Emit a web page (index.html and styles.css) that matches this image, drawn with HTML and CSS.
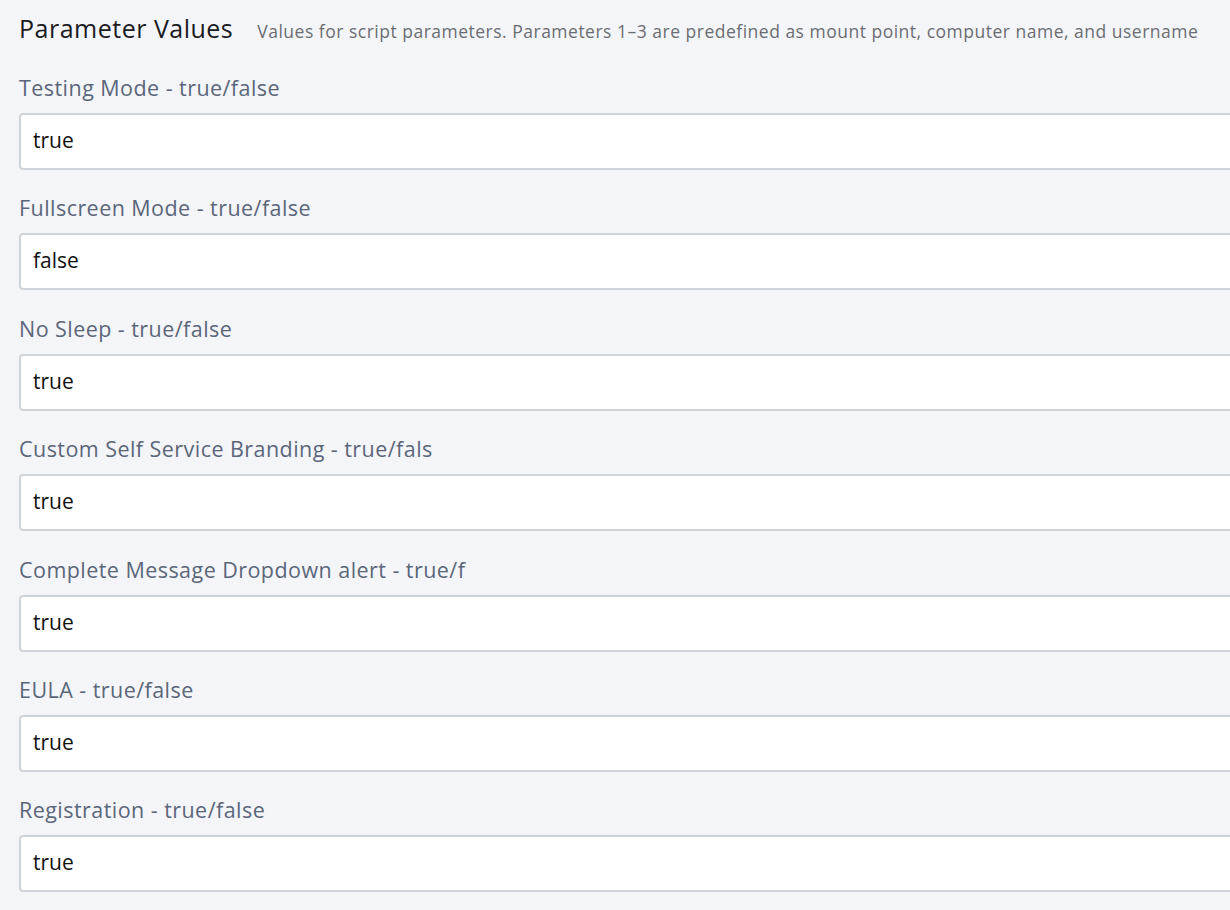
FILE: index.html
```html
<!DOCTYPE html>
<html lang="en">
<head>
<meta charset="utf-8">
<title>Parameter Values</title>
<link rel="stylesheet" href="styles.css">
</head>
<body>
<div class="page">
  <div class="header">
    <h2 class="title">Parameter Values</h2>
    <span class="subtitle">Values for script parameters. Parameters 1–3 are predefined as mount point, computer name, and username</span>
  </div>
  <div class="fields">
    <div class="field">
      <label class="label">Testing Mode - true/false</label>
      <div class="input">true</div>
    </div>
    <div class="field">
      <label class="label">Fullscreen Mode - true/false</label>
      <div class="input">false</div>
    </div>
    <div class="field">
      <label class="label">No Sleep - true/false</label>
      <div class="input">true</div>
    </div>
    <div class="field">
      <label class="label">Custom Self Service Branding - true/fals</label>
      <div class="input">true</div>
    </div>
    <div class="field">
      <label class="label">Complete Message Dropdown alert - true/f</label>
      <div class="input">true</div>
    </div>
    <div class="field">
      <label class="label">EULA - true/false</label>
      <div class="input">true</div>
    </div>
    <div class="field">
      <label class="label">Registration - true/false</label>
      <div class="input">true</div>
    </div>
  </div>
</div>
</body>
</html>
```
FILE: styles.css
```css
html, body {
  margin: 0;
  padding: 0;
  background: #f4f5f9;
  overflow: hidden;
}
body {
  font-family: "Open Sans", "Liberation Sans", sans-serif;
  width: 1230px;
  height: 910px;
}
.page {
  padding: 13px 0 0 19px;
  width: 1260px;
}
.header {
  display: flex;
  align-items: baseline;
  gap: 24px;
}
.title {
  margin: 0;
  font-size: 25px;
  line-height: 30px;
  font-weight: 400;
  letter-spacing: 0.5px;
  color: #1b1b1f;
}
.subtitle {
  font-size: 17.5px;
  letter-spacing: 0.5px;
  color: #6b6d72;
  white-space: nowrap;
}
.fields {
  display: flex;
  flex-direction: column;
  gap: 25.4px;
  margin-top: 32px;
}
.field {
  display: flex;
  flex-direction: column;
  gap: 12px;
}
.label {
  font-size: 21.5px;
  line-height: 26px;
  letter-spacing: 0.45px;
  color: #5b6679;
}
.input {
  box-sizing: border-box;
  height: 57px;
  border: 2px solid #cfd3da;
  border-radius: 4px;
  background: #fff;
  padding: 0 12px 3px;
  display: flex;
  align-items: center;
  font-size: 21px;
  color: #111;
}
```
